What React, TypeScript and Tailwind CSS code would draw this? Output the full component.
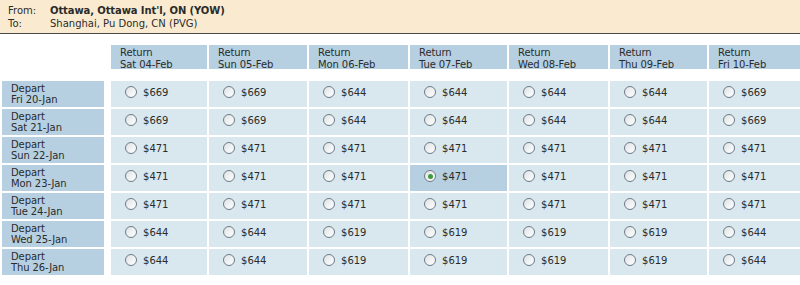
import clsx from "clsx";

const returnDates = [
  "Sat 04-Feb",
  "Sun 05-Feb",
  "Mon 06-Feb",
  "Tue 07-Feb",
  "Wed 08-Feb",
  "Thu 09-Feb",
  "Fri 10-Feb",
];

const departRows: { date: string; prices: number[] }[] = [
  { date: "Fri 20-Jan", prices: [669, 669, 644, 644, 644, 644, 669] },
  { date: "Sat 21-Jan", prices: [669, 669, 644, 644, 644, 644, 669] },
  { date: "Sun 22-Jan", prices: [471, 471, 471, 471, 471, 471, 471] },
  { date: "Mon 23-Jan", prices: [471, 471, 471, 471, 471, 471, 471] },
  { date: "Tue 24-Jan", prices: [471, 471, 471, 471, 471, 471, 471] },
  { date: "Wed 25-Jan", prices: [644, 644, 619, 619, 619, 619, 644] },
  { date: "Thu 26-Jan", prices: [644, 644, 619, 619, 619, 619, 644] },
];

const selected = { row: 3, col: 3 };

const gridCols =
  "grid grid-cols-[107px_96px_98px_99px_97px_99px_97px_91px] gap-x-[2px]";

function Radio({ checked }: { checked: boolean }) {
  return (
    <span className="flex h-[12px] w-[12px] shrink-0 items-center justify-center rounded-full border border-[#6f7b85] bg-gradient-to-br from-[#dfe3e6] to-white">
      {checked ? (
        <span className="h-[5px] w-[5px] rounded-full bg-[#3f9a3f]" />
      ) : null}
    </span>
  );
}

export default function App() {
  return (
    <div className="h-[285px] w-[800px] overflow-hidden bg-white text-[10px] text-[#2b2b2b] [font-family:'DejaVu_Sans',Verdana,sans-serif]">
      <div className="h-[34px] border-b border-[#4a4a4a] bg-[#faebd0] pl-[8px] pt-[4px] leading-[13px]">
        <div className="flex">
          <span className="w-[42px]">From:</span>
          <span className="font-bold tracking-[-0.1px]">
            Ottawa, Ottawa Int'l, ON (YOW)
          </span>
        </div>
        <div className="flex">
          <span className="w-[42px]">To:</span>
          <span>Shanghai, Pu Dong, CN (PVG)</span>
        </div>
      </div>

      <div className="pl-[2px] pt-[11px]">
        <div className={clsx(gridCols, "h-[24px]")}>
          <div />
          {returnDates.map((date) => (
            <div
              key={date}
              className="h-[24px] bg-[#b6d0e1] pl-[9px] pt-[2px] leading-[12px] tracking-[-0.1px]"
            >
              <div>Return</div>
              <div>{date}</div>
            </div>
          ))}
        </div>

        <div className={clsx(gridCols, "mt-[12px] gap-y-[2px]")}>
          {departRows.map((row, r) => (
            <div key={row.date} className="contents">
              <div className="h-[26px] w-[102px] bg-[#b6d0e1] pl-[9px] pt-[2px] leading-[11px] tracking-[-0.1px]">
                <div>Depart</div>
                <div>{row.date}</div>
              </div>
              {row.prices.map((price, c) => {
                const isSelected = r === selected.row && c === selected.col;
                return (
                  <div
                    key={c}
                    className={clsx(
                      "flex h-[26px] items-start gap-[6px] pl-[14px] pt-[5px] leading-[12px]",
                      isSelected ? "bg-[#b6d0e1]" : "bg-[#d9e8ef]"
                    )}
                  >
                    <Radio checked={isSelected} />
                    <span className="mt-[1px]">${price}</span>
                  </div>
                );
              })}
            </div>
          ))}
        </div>
      </div>
    </div>
  );
}
